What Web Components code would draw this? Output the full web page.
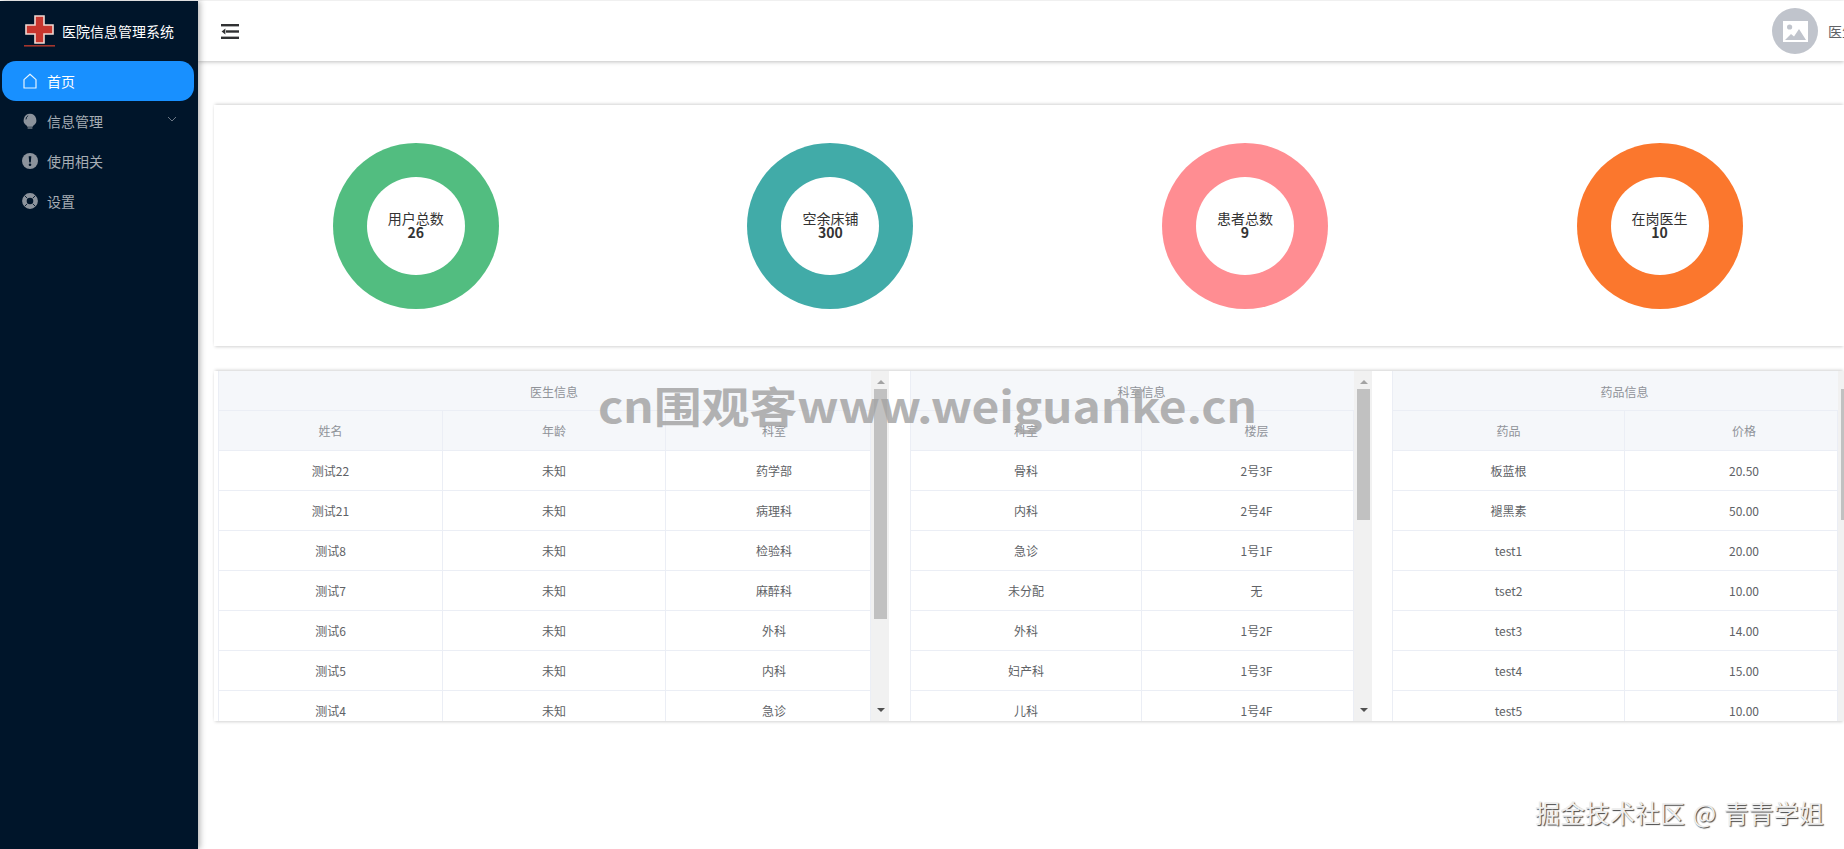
<!DOCTYPE html>
<html lang="zh">
<head>
<meta charset="utf-8">
<title>医院信息管理系统</title>
<style>
  html, body { margin: 0; height: 100%; overflow: hidden; background: #fff; }
  body { font-family: "Noto Sans CJK SC", "Liberation Sans", sans-serif; }
</style>
</head>
<body>
<hospital-app></hospital-app>
<script>
class SideBar extends HTMLElement {
  constructor() {
    super();
    this.attachShadow({ mode: 'open' });
  }
  connectedCallback() {
    this.shadowRoot.innerHTML = `
      <style>
        :host { display: block; width: 198px; flex: none; background: #00152a; color: #a6adb4; font-size: 14px; box-shadow: 2px 0 6px rgba(0,0,0,.3); z-index: 2; margin-top: 1px; }
        .logo { display: flex; align-items: center; height: 60px; padding-left: 24px; color: #fff; gap: 7px; }
        .logo svg { width: 31px; height: 32px; }
        .item { display: flex; align-items: center; height: 40px; padding-left: 22px; gap: 9px; position: relative; }
        .item svg { width: 16px; height: 16px; flex: none; }
        .active { background: #1890ff; color: #fff; border-radius: 14px; margin: 0 4px 0 2px; padding-left: 20px; }
        .item svg.arrow { position: absolute; left: 167px; top: 14px; width: 10px; height: 8px; }
      </style>
      <div class="logo">
        <svg viewBox="0 0 31 32">
          <path d="M11 1h9v9h9v9h-9v9h-9v-9H2v-9h9z" fill="#c8362e" stroke="#f0d9d2" stroke-width="1.6"/>
          <rect x="0" y="30" width="31" height="1.6" fill="#a3352d"/>
        </svg>
        <span>医院信息管理系统</span>
      </div>
      <div class="item active">
        <svg viewBox="0 0 16 16"><path d="M8 1.2 2 6.6V15h12V6.6z" fill="none" stroke="#e6f4ff" stroke-width="1.2" stroke-linejoin="round"/></svg>
        <span>首页</span>
      </div>
      <div class="item">
        <svg viewBox="0 0 16 16"><path d="M8 .8a6.4 6.4 0 0 0-3.2 11.9l.5 1h5.4l.5-1A6.4 6.4 0 0 0 8 .8z" fill="#8c939c"/><path d="M6.2 2.6A4.4 4.4 0 0 0 4 6.4" fill="none" stroke="#00152a" stroke-width=".9"/><rect x="5.6" y="14.4" width="4.8" height="1.2" fill="#8c939c"/></svg>
        <span>信息管理</span>
        <svg class="arrow" viewBox="0 0 10 8"><path d="M1 2l4 4 4-4" fill="none" stroke="#6b7785" stroke-width="1"/></svg>
      </div>
      <div class="item">
        <svg viewBox="0 0 16 16"><circle cx="8" cy="8" r="8" fill="#8c939c"/><path d="M6.7 3.2h2.6L8.8 9.6H7.2z" fill="#00152a"/><circle cx="8" cy="11.7" r="1.3" fill="#00152a"/></svg>
        <span>使用相关</span>
      </div>
      <div class="item">
        <svg viewBox="0 0 16 16"><circle cx="8" cy="8" r="5.6" fill="none" stroke="#8c939c" stroke-width="4.6"/><path d="M2.6 2.6l2.6 2.6M13.4 2.6l-2.6 2.6M2.6 13.4l2.6-2.6M13.4 13.4l-2.6-2.6" stroke="#00152a" stroke-width=".9"/></svg>
        <span>设置</span>
      </div>
    `;
  }
}
customElements.define('side-bar', SideBar);

class TopBar extends HTMLElement {
  constructor() {
    super();
    this.attachShadow({ mode: 'open' });
  }
  connectedCallback() {
    this.shadowRoot.innerHTML = `
      <style>
        :host { display: flex; align-items: center; height: 60px; margin-top: 1px; padding-left: 23px; box-shadow: 0 1px 4px rgba(0,0,0,.25); font-size: 14px; color: #606266; }
        svg.menu { width: 18px; height: 15px; }
        .avatar { width: 46px; height: 46px; border-radius: 50%; background: #c0c4cc; display: flex; align-items: center; justify-content: center; margin-left: auto; flex: none; }
        .avatar svg { width: 25px; height: 21px; }
        .name { margin-left: 10px; width: 16px; overflow: hidden; white-space: nowrap; flex: none; }
      </style>
      <svg class="menu" viewBox="0 0 18 15">
        <rect x="0" y="0" width="18" height="2.4" fill="#303133"/>
        <rect x="5" y="6.3" width="13" height="2.4" fill="#303133"/>
        <path d="M4.4 4.4v6.2L.6 7.5z" fill="#303133"/>
        <rect x="0" y="12.6" width="18" height="2.4" fill="#303133"/>
      </svg>
      <div class="avatar">
        <svg viewBox="0 0 25 21"><rect width="25" height="21" fill="#fff"/><circle cx="6.6" cy="6" r="2.6" fill="#c0c4cc"/><path d="M2 19l6-6 3 2.6L16 8l7 11z" fill="#c0c4cc"/></svg>
      </div>
      <div class="name">医生</div>
    `;
  }
}
customElements.define('top-bar', TopBar);

class StatDonut extends HTMLElement {
  constructor() {
    super();
    this.attachShadow({ mode: 'open' });
  }
  connectedCallback() {
    const color = this.getAttribute('color') || '#ccc';
    this.shadowRoot.innerHTML = `
      <style>
        :host { display: flex; justify-content: center; align-items: center; width: 414.6px; flex: none; }
        .ring { width: 166px; height: 166px; border-radius: 50%; background: ${color}; display: flex; align-items: center; justify-content: center; }
        .hole { width: 98px; height: 98px; border-radius: 50%; background: #fff; display: flex; flex-direction: column; align-items: center; justify-content: center; font-size: 14px; line-height: 14px; color: #333; padding-bottom: 1px; box-sizing: border-box; }
        b { font-weight: 700; }
      </style>
      <div class="ring"><div class="hole"><span>${this.getAttribute('label')}</span><b>${this.getAttribute('value')}</b></div></div>
    `;
  }
}
customElements.define('stat-donut', StatDonut);

class DataTable extends HTMLElement {
  constructor() {
    super();
    this.attachShadow({ mode: 'open' });
  }
  connectedCallback() {
    const title = this.getAttribute('title');
    const cols = this.getAttribute('cols').split(',');
    const widths = this.getAttribute('widths').split(',');
    const rows = JSON.parse(this.getAttribute('rows'));
    const thumb = this.getAttribute('thumb');
    const pad = this.getAttribute('pad') || 0;
    const grid = `grid-template-columns:${widths.map(w => w + 'px').join(' ')}`;
    const cell = c => `<div class="c">${c}</div>`;
    this.shadowRoot.innerHTML = `
      <style>
        :host { display: flex; flex: none; height: 350px; overflow: hidden; font-size: 12px; color: #606266; }
        .t { flex: none; overflow: hidden; border-left: 1px solid #ebeef5; }
        .title { height: 39px; line-height: 41px; padding-left: 18px; box-sizing: content-box; text-align: center; background: #f5f7fa; color: #909399; border-bottom: 1px solid #ebeef5; }
        .r { display: grid; height: 40px; }
        .r.h { background: #f5f7fa; color: #909399; }
        .c { display: flex; align-items: center; justify-content: center; border-right: 1px solid #ebeef5; border-bottom: 1px solid #ebeef5; box-sizing: border-box; }
        .c:last-child { padding-left: ${pad}px; }
        .bar { width: 18px; flex: none; background: #f1f1f1; position: relative; }
        .bar i { position: absolute; left: 3px; top: 18px; width: 13px; height: ${thumb}px; background: #c1c1c1; }
        .bar u { position: absolute; left: 6px; width: 0; height: 0; border: 4px solid transparent; }
        .up { top: 5px; border-bottom-color: #a3a3a3 !important; }
        .down { bottom: 5px; border-top-color: #505050 !important; }
      </style>
      <div class="t" style="width:${widths.reduce((a, b) => a + +b, 0)}px">
        <div class="title">${title}</div>
        <div class="r h" style="${grid}">${cols.map(cell).join('')}</div>
        ${rows.map(r => `<div class="r" style="${grid}">${r.map(cell).join('')}</div>`).join('')}
      </div>
      <div class="bar"><u class="up"></u><i></i><u class="down"></u></div>
    `;
  }
}
customElements.define('data-table', DataTable);

class HospitalApp extends HTMLElement {
  constructor() {
    super();
    this.attachShadow({ mode: 'open' });
  }
  connectedCallback() {
    const t1 = [['测试22','未知','药学部'],['测试21','未知','病理科'],['测试8','未知','检验科'],['测试7','未知','麻醉科'],['测试6','未知','外科'],['测试5','未知','内科'],['测试4','未知','急诊']];
    const t2 = [['骨科','2号3F'],['内科','2号4F'],['急诊','1号1F'],['未分配','无'],['外科','1号2F'],['妇产科','1号3F'],['儿科','1号4F']];
    const t3 = [['板蓝根','20.50'],['褪黑素','50.00'],['test1','20.00'],['tset2','10.00'],['test3','14.00'],['test4','15.00'],['test5','10.00']];
    this.shadowRoot.innerHTML = `
      <style>
        :host { display: flex; width: 1844px; height: 849px; overflow: hidden; position: relative; }
        main { flex: 1; min-width: 0; overflow: hidden; }
        .stats { display: flex; height: 241px; margin: 44px 0 25px 16px; box-shadow: 0 -2px 3px -1px rgba(0,0,0,.18), 0 2px 3px -1px rgba(0,0,0,.18); align-items: center; }
        .stats stat-donut:first-child { margin-left: -5.5px; }
        .tables { display: flex; margin: 0 0 4px 16px; padding-left: 4px; gap: 20px; box-shadow: 0 -2px 3px -1px rgba(0,0,0,.18), 0 2px 3px -1px rgba(0,0,0,.18); }
        .tables data-table:nth-child(2) { margin-left: 1px; }
        .mark { position: absolute; left: 598px; top: 372px; font-size: 48px; line-height: 66px; font-weight: 700; letter-spacing: -.18px; color: rgba(165,165,165,.85); white-space: nowrap; transform: scaleY(.88); pointer-events: none; }
        .credit { position: absolute; left: 1535px; top: 796px; font-size: 25px; line-height: 32px; word-spacing: 2px; color: #eee; text-shadow: 1px 1px 1px #444; white-space: nowrap; }
      </style>
      <side-bar></side-bar>
      <main>
        <top-bar></top-bar>
        <div class="stats">
          <stat-donut label="用户总数" value="26" color="#52bd80"></stat-donut>
          <stat-donut label="空余床铺" value="300" color="#41aba8"></stat-donut>
          <stat-donut label="患者总数" value="9" color="#ff8d92"></stat-donut>
          <stat-donut label="在岗医生" value="10" color="#fb772d"></stat-donut>
        </div>
        <div class="tables">
          <data-table title="医生信息" cols="姓名,年龄,科室" widths="224,223,205" pad="12" thumb="230" rows='${JSON.stringify(t1)}'></data-table>
          <data-table title="科室信息" cols="科室,楼层" widths="231,212" pad="18" thumb="131" rows='${JSON.stringify(t2)}'></data-table>
          <data-table title="药品信息" cols="药品,价格" widths="232,213" pad="26" thumb="131" rows='${JSON.stringify(t3)}'></data-table>
        </div>
      </main>
      <div class="mark">cn围观客www.weiguanke.cn</div>
      <div class="credit">掘金技术社区 @ 青青学姐</div>
    `;
  }
}
customElements.define('hospital-app', HospitalApp);
</script>
</body>
</html>
